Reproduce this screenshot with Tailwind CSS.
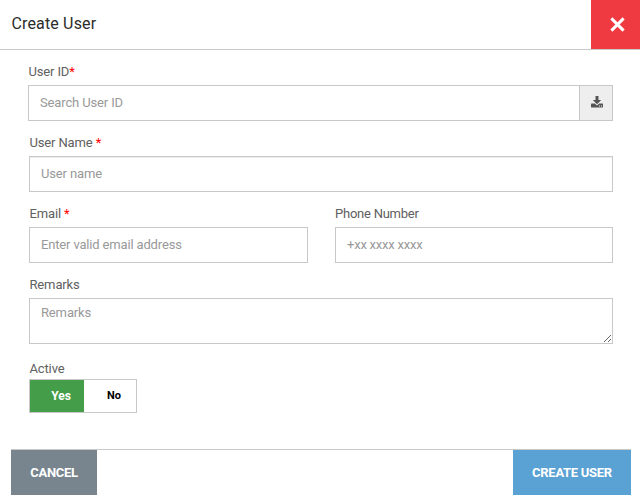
<!DOCTYPE html>
<html lang="en">
<head>
<meta charset="utf-8">
<title>Create User</title>
<script src="https://cdn.jsdelivr.net/npm/@tailwindcss/browser@4"></script>
</head>
<body class="bg-white font-[Roboto,sans-serif] text-[13px] leading-5 tracking-[-0.14px] text-[#606060]">
<div class="flex h-[502px] w-[640px] flex-col overflow-hidden">
  <header class="flex h-[50px] shrink-0 justify-between border-b border-[#c8c8c8]">
    <h1 class="pl-[11.5px] pt-[14px] text-base leading-5 tracking-[0.15px] text-[#2b2b2b]">Create User</h1>
    <button class="flex w-[49px] items-center justify-center bg-[#f03a42]" aria-label="Close">
      <svg class="ml-[3px] h-[15px] w-[15px]" viewBox="0 0 15 15" fill="none" stroke="#fff" stroke-width="3" stroke-linecap="butt"><path d="M1.4 1.4 13.6 13.6M13.6 1.4 1.4 13.6"/></svg>
    </button>
  </header>
  <form class="flex flex-col pl-[29px] pr-[27px] pt-3">
    <div class="-ml-px">
      <label class="block h-[23px] pl-[0.5px]">User ID<span class="text-[#f00]">*</span></label>
      <div class="flex h-9 border border-[#c8c8c8]">
        <input class="min-w-0 flex-1 px-[11px] pb-px tracking-[-0.14px] outline-none placeholder:text-[#999]" placeholder="Search User ID">
        <button type="button" class="flex w-[33px] items-center justify-center border-l border-[#c8c8c8] bg-[#eee]" aria-label="Download">
          <svg class="mb-[2px] ml-[1px] h-3 w-3" viewBox="0 0 12 12" fill="#555"><path d="M4.5 0h3v4h2.7L6 8.2 1.8 4h2.7z"/><path fill-rule="evenodd" d="M.6 7.5h3.2L6 9.5l2.200-2h3.200q.6 0 .6.6v2.800q0 .6-.6.6H.6q-.6 0-.6-.6V8.100q0-.6.6-.6zM8 9.600v1h1v-1zM10 9.600v1h1v-1z"/></svg>
        </button>
      </div>
    </div>
    <div class="mt-3">
      <label class="block h-[23px] pl-[0.5px]">User Name <span class="text-[#f00]">*</span></label>
      <input class="block h-9 w-full border border-[#c8c8c8] px-[11px] pb-px tracking-[-0.14px] shadow-[inset_0_1px_1px_rgba(0,0,0,0.075)] outline-none placeholder:text-[#999]" placeholder="User name">
    </div>
    <div class="mt-3 grid grid-cols-[279px_278px] gap-[27px]">
      <div>
        <label class="block h-[23px] pl-[0.5px]">Email <span class="text-[#f00]">*</span></label>
        <input class="block h-9 w-full border border-[#c8c8c8] px-[11px] pb-px tracking-[-0.16px] outline-none placeholder:text-[#999]" placeholder="Enter valid email address">
      </div>
      <div>
        <label class="block h-[23px] tracking-[-0.24px]">Phone Number</label>
        <input class="block h-9 w-full border border-[#c8c8c8] px-[11px] pb-px tracking-[-0.22px] outline-none placeholder:text-[#999]" placeholder="+xx xxxx xxxx">
      </div>
    </div>
    <div class="mt-3">
      <label class="block h-[23px] pl-[0.5px]">Remarks</label>
      <textarea class="block h-[46px] w-full resize border border-[#c8c8c8] px-[11px] py-1 tracking-[-0.14px] outline-none placeholder:text-[#999]" placeholder="Remarks"></textarea>
    </div>
    <div class="mt-[15px]">
      <label class="block h-5 pl-[0.5px]">Active</label>
      <div class="flex h-[34px] w-[108px] border border-[#c8c8c8] font-bold tracking-normal">
        <button type="button" class="w-[54px] bg-[#449d48] pl-2 text-xs text-white">Yes</button>
        <button type="button" class="flex-1 pl-2 text-[11px] text-black">No</button>
      </div>
    </div>
  </form>
  <footer class="mr-[9px] ml-[11px] mt-9 flex h-[46px] shrink-0 justify-between border-t border-[#c8c8c8] font-bold tracking-[-0.28px] text-white">
    <button class="w-[86px] bg-[#78858f]">CANCEL</button>
    <button class="w-[118px] bg-[#5aa1d4]">CREATE USER</button>
  </footer>
</div>
</body>
</html>
